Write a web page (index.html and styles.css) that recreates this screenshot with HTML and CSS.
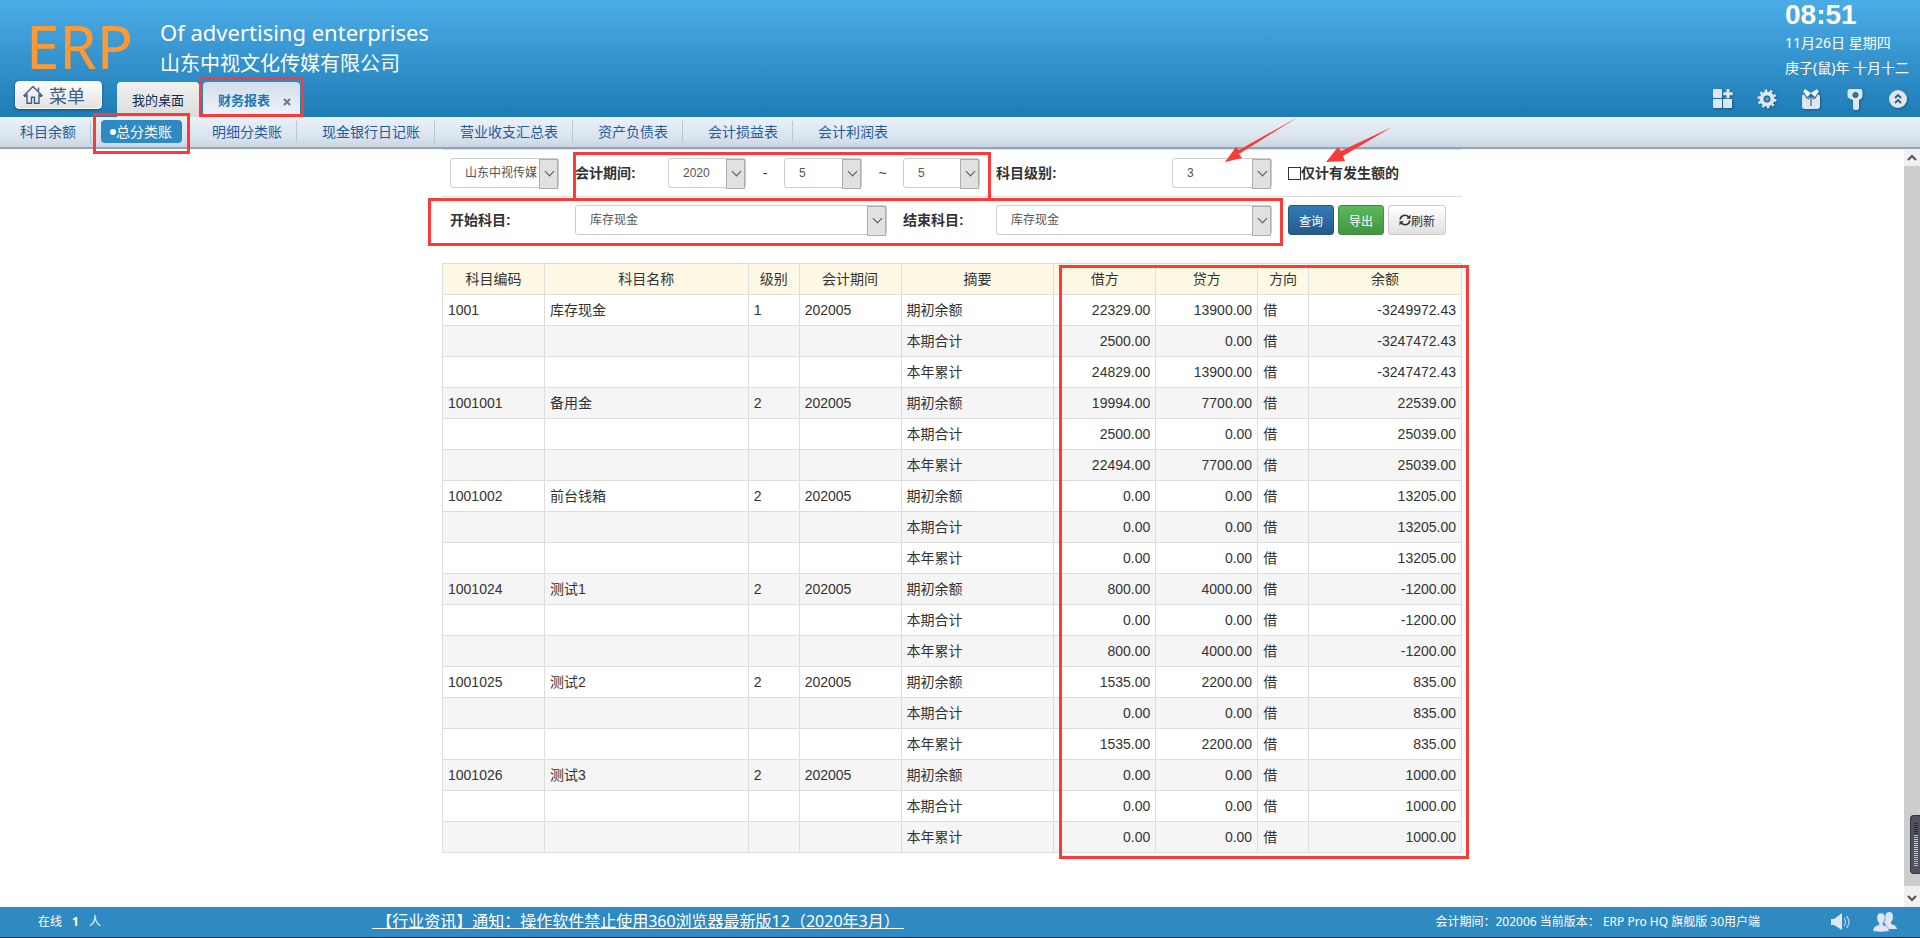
FILE: index.html
```html
<!DOCTYPE html>
<html lang="zh-CN">

<head>
    <meta charset="UTF-8">
    <meta name="viewport" content="width=device-width, initial-scale=1.0">
    <title>ERP - 总分类账</title>
    <link rel="stylesheet" href="styles.css">
</head>

<body>

    <!-- Header -->
    <header class="header">
        <div class="brand">
            <div class="logo">ERP</div>
            <div class="company">
                <div class="company-en">Of advertising enterprises</div>
                <div class="company-cn">山东中视文化传媒有限公司</div>
            </div>
        </div>

        <div class="clock">
            <div class="time">08:51</div>
            <div class="date">11月26日 星期四</div>
            <div class="date">庚子(鼠)年 十月十二</div>
        </div>

        <div class="tab-bar">
            <button class="menu-btn" type="button">
                <svg width="20" height="20" viewBox="0 0 20 20" fill="none" stroke="#3f5f86" stroke-width="1.4">
                    <path d="M1 10.5 10 1.5l9 9-1 1-2-1.7v8.5h-4.5v-6h-3v6H4V9.8l-2 1.7z" />
                    <path d="M15.5 2.5V6" />
                </svg>
                菜单
            </button>
            <button class="tab" type="button">我的桌面</button>
            <div class="tab tab-active">
                <span>财务报表</span>
                <button class="tab-close" type="button" aria-label="关闭">
                    <svg width="8" height="8" viewBox="0 0 8 8" stroke="#777" stroke-width="2">
                        <path d="M1 1l6 6M7 1L1 7" />
                    </svg>
                </button>
                <i class="mark mark-tab"></i>
            </div>
        </div>

        <div class="tools">
            <button type="button" aria-label="应用">
                <svg width="20" height="20" viewBox="0 0 20 20" fill="#dfe6f0">
                    <rect x="0" y="0" width="9" height="9" rx="1" />
                    <rect x="0" y="10" width="9" height="9" rx="1" />
                    <rect x="10" y="10" width="9" height="9" rx="1" />
                    <path d="M13.500 0h3v3.200h3.200v3h-3.200v3h-3v-3h-3.200v-3h3.200z" />
                </svg>
            </button>
            <button type="button" aria-label="设置">
                <svg width="20" height="20" viewBox="0 0 20 20" fill="none" stroke="#dfe6f0">
                    <circle cx="10" cy="10" r="5.5" stroke-width="4" />
                    <circle cx="10" cy="10" r="8.3" stroke-width="2.4" stroke-dasharray="2.6 2.615" />
                    <circle cx="10" cy="10" r="2" fill="#5e9cc8" stroke="none" />
                </svg>
            </button>
            <button type="button" aria-label="皮肤">
                <svg width="20" height="20" viewBox="0 0 20 20">
                    <path d="M1 8q0-2 2-3h14q2 1 2 3v9q0 3-3 3H4q-3 0-3-3z" fill="#dfe6f0" />
                    <path d="M4 0l6 4 6-4 2 3-4 6-4-4-4 4-4-6z" fill="#f2f6fb" />
                    <path d="M2.500 3.500L6 9l4-4 4 4 3.500-5.500M10 6v11M7 10.500l3-4 3 4" fill="none" stroke="#2f6f9f" stroke-width="1.2" />
                </svg>
            </button>
            <button type="button" aria-label="密码">
                <svg width="20" height="21" viewBox="0 0 20 21">
                    <path d="M5 0h10q2.500 0 2.500 2v5q0 2.500-3.500 4v8q0 2-2 2h-2q-2 0-2-2v-8Q2.500 9.500 2.500 7V2Q2.500 0 5 0z" fill="#dfe6f0" />
                    <circle cx="10.500" cy="6" r="2.600" fill="#2d79ad" stroke="#245f88" />
                </svg>
            </button>
            <button type="button" aria-label="收起">
                <svg width="18" height="18" viewBox="0 0 18 18" fill="none">
                    <circle cx="9" cy="9" r="9" fill="#dfe6f0" />
                    <path d="M6 8l3-3 3 3M6 13l3-3 3 3" stroke="#2a5f86" stroke-width="1.8" />
                </svg>
            </button>
        </div>
    </header>

    <!-- Sub navigation -->
    <nav class="subnav">
        <a class="nav-first" href="#">科目余额</a>
        <span class="nav-current"><a href="#">总分类账</a><i class="mark mark-nav"></i></span>
        <a href="#">明细分类账</a>
        <a href="#">现金银行日记账</a>
        <a href="#">营业收支汇总表</a>
        <a href="#">资产负债表</a>
        <a href="#">会计损益表</a>
        <a href="#">会计利润表</a>
    </nav>

    <!-- Content -->
    <div class="main">
        <main class="content">
            <form class="filter">
                <div class="filter-row period-row">
                    <div class="select-box">
                        <select aria-label="公司"><option>山东中视传媒</option></select>
                    </div>
                    <label for="year">会计期间:</label>
                    <div class="select-box">
                        <select id="year"><option>2020</option></select>
                    </div>
                    <span class="sep">-</span>
                    <div class="select-box">
                        <select aria-label="开始月份"><option>5</option></select>
                    </div>
                    <span class="sep">~</span>
                    <div class="select-box">
                        <select aria-label="结束月份"><option>5</option></select>
                    </div>
                    <label for="level">科目级别:</label>
                    <div class="select-box">
                        <select id="level"><option>3</option></select>
                    </div>
                    <label class="check"><input type="checkbox">仅计有发生额的</label>
                </div>
                <div class="filter-row subject-row">
                    <label for="startSubject">开始科目:</label>
                    <div class="select-box">
                        <select id="startSubject"><option>库存现金</option></select>
                    </div>
                    <label for="endSubject">结束科目:</label>
                    <div class="select-box">
                        <select id="endSubject"><option>库存现金</option></select>
                    </div>
                    <div class="actions">
                        <button class="btn btn-primary" type="button">查询</button>
                        <button class="btn btn-success" type="button">导出</button>
                        <button class="btn btn-default" type="button">
                            <svg width="12" height="12" viewBox="0 0 12 12" fill="none" stroke="#333" stroke-width="1.7">
                                <path d="M1.200 5.500A4.700 4.700 0 0 1 9.500 3M10.800 6.500A4.700 4.700 0 0 1 2.500 9" />
                                <path d="M11.500.5v4.200H7.300zM.5 11.500V7.300h4.200z" fill="#333" stroke="none" />
                            </svg>刷新
                        </button>
                    </div>
                </div>
                <i class="mark mark-period"></i>
                <i class="mark mark-subject"></i>
                <svg class="arrows" width="170" height="50" viewBox="0 0 170 50" fill="#fb3b3a">
                    <path d="M76 0L17 33l-3-3L3 45l17-4-3-4z" />
                    <path d="M170 10l-51 24-3-4-12 15 19-1-2-5z" />
                </svg>
            </form>

            <div class="table-wrap">
                <table>
                    <colgroup>
                        <col class="w10"><col class="w20"><col class="w5"><col class="w10"><col class="w15">
                        <col class="w10"><col class="w10"><col class="w5"><col class="w15">
                    </colgroup>
                    <thead>
                        <tr>
                            <th>科目编码</th><th>科目名称</th><th>级别</th><th>会计期间</th><th>摘要</th>
                            <th>借方</th><th>贷方</th><th>方向</th><th>余额</th>
                        </tr>
                    </thead>
                    <tbody id="ledger"></tbody>
                </table>
                <i class="mark mark-table"></i>
            </div>
        </main>

        <div class="scrollbar">
            <svg width="16" height="17" viewBox="0 0 16 17" fill="none" stroke="#505050" stroke-width="2"><path d="M4 11l4-4 4 4" /></svg>
            <div class="thumb"></div>
            <svg width="16" height="21" viewBox="0 0 16 21" fill="none" stroke="#505050" stroke-width="2"><path d="M4 10l4 4 4-4" /></svg>
        </div>
        <div class="meter"><div class="meter-bars"></div></div>
    </div>

    <!-- Footer -->
    <footer class="footer">
        <div class="online"><span>在线</span><b>1</b><span>人</span></div>
        <div>
            <a class="news" href="#">&nbsp;【行业资讯】通知：操作软件禁止使用360浏览器最新版12（2020年3月）&nbsp;</a>
        </div>
        <div class="version">会计期间：202006 当前版本： ERP Pro HQ 旗舰版 30用户端</div>
        <div class="footer-icons">
            <svg width="20" height="18" viewBox="0 0 20 18" fill="#dfe6f0">
                <path d="M0 6h3l8-6v17L3 12H0z" />
                <path d="M13 5q3 4 0 8M15.500 3q5 6 0 12" fill="none" stroke="#b9d3ea" stroke-width="1.2" />
            </svg>
            <svg width="24" height="20" viewBox="0 0 24 20" fill="#dfe6f0">
                <path d="M16 0q4 0 4 5 0 3-2 5v2q5 1 6 5h-9l-4-7q2-1 1-4 0-6 4-6z" />
                <path d="M8 1q4 0 4 5 0 3-2 5v2q6 1 6 6-8 2-16 0 0-5 6-6v-2q-2-2-2-5 0-5 4-5z" stroke="#6f9cc0" stroke-width=".6" />
            </svg>
        </div>
    </footer>

    <script>
        const summaries = ['期初余额', '本期合计', '本年累计'];

        // code, name, level, [debit, credit, balance] for each summary line
        const accounts = [
            ['1001', '库存现金', 1, [['22329.00', '13900.00', '-3249972.43'], ['2500.00', '0.00', '-3247472.43'], ['24829.00', '13900.00', '-3247472.43']]],
            ['1001001', '备用金', 2, [['19994.00', '7700.00', '22539.00'], ['2500.00', '0.00', '25039.00'], ['22494.00', '7700.00', '25039.00']]],
            ['1001002', '前台钱箱', 2, [['0.00', '0.00', '13205.00'], ['0.00', '0.00', '13205.00'], ['0.00', '0.00', '13205.00']]],
            ['1001024', '测试1', 2, [['800.00', '4000.00', '-1200.00'], ['0.00', '0.00', '-1200.00'], ['800.00', '4000.00', '-1200.00']]],
            ['1001025', '测试2', 2, [['1535.00', '2200.00', '835.00'], ['0.00', '0.00', '835.00'], ['1535.00', '2200.00', '835.00']]],
            ['1001026', '测试3', 2, [['0.00', '0.00', '1000.00'], ['0.00', '0.00', '1000.00'], ['0.00', '0.00', '1000.00']]]
        ];

        let rows = '';
        accounts.forEach(([code, name, level, lines]) => {
            lines.forEach(([debit, credit, balance], i) => {
                // account details only show on the first line of a group
                const head = i === 0 ? [code, name, level, '202005'] : ['', '', '', ''];
                rows += '<tr>' + head.map(v => `<td>${v}</td>`).join('') +
                    `<td>${summaries[i]}</td><td class="num">${debit}</td><td class="num">${credit}</td>` +
                    `<td>借</td><td class="num">${balance}</td></tr>`;
            });
        });
        document.getElementById('ledger').innerHTML = rows;
    </script>

</body>

</html>
```
FILE: styles.css
```css
* {
    box-sizing: border-box;
}

body {
    margin: 0;
    height: 100vh;
    display: flex;
    flex-direction: column;
    background-color: #fff;
    color: #333;
    font-family: "Liberation Sans", "Noto Sans CJK SC", sans-serif;
    font-size: 14px;
    line-height: 20px;
}

button,
select,
input {
    font-family: inherit;
    margin: 0;
}

a {
    text-decoration: none;
}

/* Header */
.header {
    flex: none;
    height: 117px;
    display: grid;
    grid-template-columns: 1fr auto;
    grid-template-rows: 77px 40px;
    background: linear-gradient(#4cace7, #1e7cb5);
    color: #fff;
}

.brand {
    display: flex;
    padding-left: 26px;
    gap: 28px;
    font-family: "Noto Sans", "Noto Sans CJK SC", sans-serif;
}

.logo {
    width: 106px;
    color: #ff9933;
    font-size: 60px;
    line-height: 92px;
}

.company {
    padding-top: 17px;
}

.company-en {
    font-size: 22px;
    line-height: 30px;
}

.company-cn {
    font-size: 20px;
    line-height: 34px;
}

.tab-bar {
    display: flex;
    align-items: flex-end;
    padding-left: 15px;
}

.menu-btn {
    width: 87px;
    height: 28px;
    margin: 0 15px 8px 0;
    padding: 0 0 0 7px;
    display: flex;
    align-items: center;
    gap: 6px;
    border: 1px solid #fff;
    border-radius: 4px;
    background: linear-gradient(#fdfdfd, #e3e3e3);
    box-shadow: 0 1px 3px #14507a;
    color: #3f5f86;
    font-size: 18px;
}

.tab {
    width: 82px;
    height: 35px;
    padding: 0;
    border: none;
    border-radius: 4px 4px 0 0;
    background: linear-gradient(#f0f0f0, #dcdcdc);
    color: #0f2c4d;
    font-size: 13px;
}

.tab-active {
    position: relative;
    width: 97px;
    margin-left: 4px;
    padding: 2px 8px 0 15px;
    display: flex;
    align-items: center;
    justify-content: space-between;
    background: linear-gradient(#d3deec, #eef4fc);
    color: #1a78b4;
    font-weight: bold;
}

.tab-close {
    display: flex;
    padding: 2px 1px 0;
    border: none;
    background: none;
}

.clock {
    width: 135px;
    justify-self: end;
    font-family: "Noto Sans", "Noto Sans CJK SC", sans-serif;
}

.time {
    font-family: "Liberation Sans", sans-serif;
    font-size: 28px;
    font-weight: bold;
    line-height: 30px;
}

.date {
    line-height: 25px;
    white-space: nowrap;
}

.tools {
    display: flex;
    align-items: center;
    gap: 24px;
    padding: 4px 13px 0 0;
}

.tools button {
    display: flex;
    padding: 0;
    border: none;
    background: none;
    filter: drop-shadow(1px 1px 1px #185a87);
}

/* Sub navigation */
.subnav {
    flex: none;
    height: 32px;
    display: flex;
    padding-bottom: 3px;
    background: linear-gradient(#eaf1f8, #d9e3ee 70%, #c8d5e1);
    border-bottom: 2px solid #8fa6bc;
}

.subnav > a {
    height: 22px;
    margin-top: 4px;
    padding: 0 14px 0 25px;
    border-right: 1px solid #b6c8da;
    color: #1f5c9f;
    line-height: 22px;
}

.subnav > a:last-child {
    border-right: none;
}

.subnav > .nav-first {
    padding: 0 14px 0 20px;
}

.nav-current {
    position: relative;
    height: 23px;
    margin: 3px 5px 0 10px;
}

.nav-current a {
    display: flex;
    align-items: center;
    height: 23px;
    padding: 0 10px 0 9px;
    border-radius: 4px;
    background-color: #2f8ac2;
    color: #fff;
}

.nav-current a::before {
    content: "";
    width: 6px;
    height: 6px;
    border-radius: 50%;
    background-color: #fff;
}

/* Content */
.main {
    position: relative;
    flex: 1;
    min-height: 0;
    display: flex;
}

.content {
    flex: 1;
    min-width: 0;
}

.filter,
.table-wrap {
    position: relative;
    max-width: 1020px;
    margin: 0 auto;
}

.filter-row {
    display: grid;
    align-items: center;
    border-top: 1px solid #ddd;
}

.filter-row > * {
    margin: 8px;
}

.period-row {
    grid-template-columns: 125fr 93fr 94fr 22fr 94fr 25fr 93fr 176fr 116fr 182fr;
}

.subject-row {
    grid-template-columns: 125fr 328fr 93fr 292fr 182fr;
}

.filter label {
    font-weight: bold;
    white-space: nowrap;
}

.filter .sep {
    margin: 0;
    text-align: center;
}

.filter .check {
    display: flex;
    align-items: center;
}

.check input {
    appearance: none;
    width: 13px;
    height: 13px;
    border: 1px solid #333;
    background-color: #fff;
}

.select-box {
    position: relative;
    min-width: 0;
    height: 30px;
}

.select-box select {
    appearance: none;
    width: 100%;
    height: 30px;
    padding: 0 18px 0 14px;
    border: 1px solid #ccc;
    border-radius: 3px;
    background-color: #fff;
    color: #555;
    font-size: 12px;
}

.select-box::before {
    content: "";
    position: absolute;
    top: 1px;
    right: 1px;
    width: 17px;
    height: 28px;
    border: 1px solid #adadad;
    background-color: #e1e1e1;
    pointer-events: none;
}

.select-box::after {
    content: "";
    position: absolute;
    top: 10px;
    right: 6px;
    width: 6px;
    height: 6px;
    border: solid #555;
    border-width: 0 1px 1px 0;
    transform: rotate(45deg);
    pointer-events: none;
}

.actions {
    display: flex;
    gap: 4px;
}

.btn {
    height: 30px;
    padding: 0 10px;
    display: flex;
    align-items: center;
    border: 1px solid #ccc;
    border-radius: 3px;
    font-size: 12px;
}

.btn-primary {
    border-color: #245580;
    background: linear-gradient(#337ab7, #265a88);
    color: #fff;
}

.btn-success {
    border-color: #3e8f3e;
    background: linear-gradient(#5cb85c, #419641);
    color: #fff;
}

.btn-default {
    background: linear-gradient(#fff, #e0e0e0);
    color: #333;
}

/* Ledger table */
.table-wrap {
    margin-top: 20px;
}

table {
    width: 100%;
    border-collapse: collapse;
    table-layout: fixed;
}

.w5 { width: 5%; }
.w10 { width: 10%; }
.w15 { width: 15%; }
.w20 { width: 20%; }

th,
td {
    height: 31px;
    padding: 5px;
    border: 1px solid #ddd;
    text-align: left;
}

th {
    background-color: #fdf8e4;
    font-weight: normal;
    text-align: center;
}

tbody tr:nth-child(even) {
    background-color: #f5f5f5;
}

td.num {
    text-align: right;
}

/* Red callouts */
.mark {
    position: absolute;
    z-index: 2;
    border: 3px solid #fb3b3a;
    pointer-events: none;
}

.mark-tab {
    inset: -5px -4px 0;
}

.mark-nav {
    inset: -7px -8px -11px;
}

.mark-period {
    inset: 3px 471px 42px 131px;
}

.mark-subject {
    inset: 49px 179px -3px -14px;
}

.mark-table {
    inset: 2px -7px -6px 617px;
}

.arrows {
    position: absolute;
    z-index: 2;
    top: -32px;
    right: 70px;
    pointer-events: none;
}

/* Scrollbar */
.scrollbar {
    flex: none;
    width: 16px;
    display: flex;
    flex-direction: column;
    background-color: #f0f0f0;
}

.thumb {
    flex: 1;
    background-color: #cdcdcd;
}

.meter {
    position: absolute;
    right: 0;
    bottom: 33px;
    width: 10px;
    height: 59px;
    padding: 7px 2px 7px 3px;
    border: 1px solid #33363f;
    border-right: none;
    border-radius: 4px 0 0 4px;
    background-color: #50535f;
}

.meter-bars {
    height: 100%;
    background: repeating-linear-gradient(transparent 0 1px, #50535f 1px 2px), linear-gradient(#2c2e36 25%, #f0b040 26%, #e8e060 50%, #60e0c8 90%);
}

/* Footer */
.footer {
    flex: none;
    height: 31px;
    display: grid;
    grid-template-columns: 372px 1fr auto 160px;
    align-items: center;
    border-bottom: 1px solid #1d2b2e;
    background-color: #2f8ac2;
    color: #fff;
    font-family: "Noto Sans", "Noto Sans CJK SC", sans-serif;
    font-size: 12px;
}

.online {
    display: flex;
    gap: 10px;
    padding-left: 38px;
}

.news {
    color: #fff;
    font-size: 16px;
    text-decoration: underline;
}

.footer-icons {
    display: flex;
    align-items: center;
    justify-content: flex-end;
    gap: 22px;
    padding-right: 23px;
}
```
